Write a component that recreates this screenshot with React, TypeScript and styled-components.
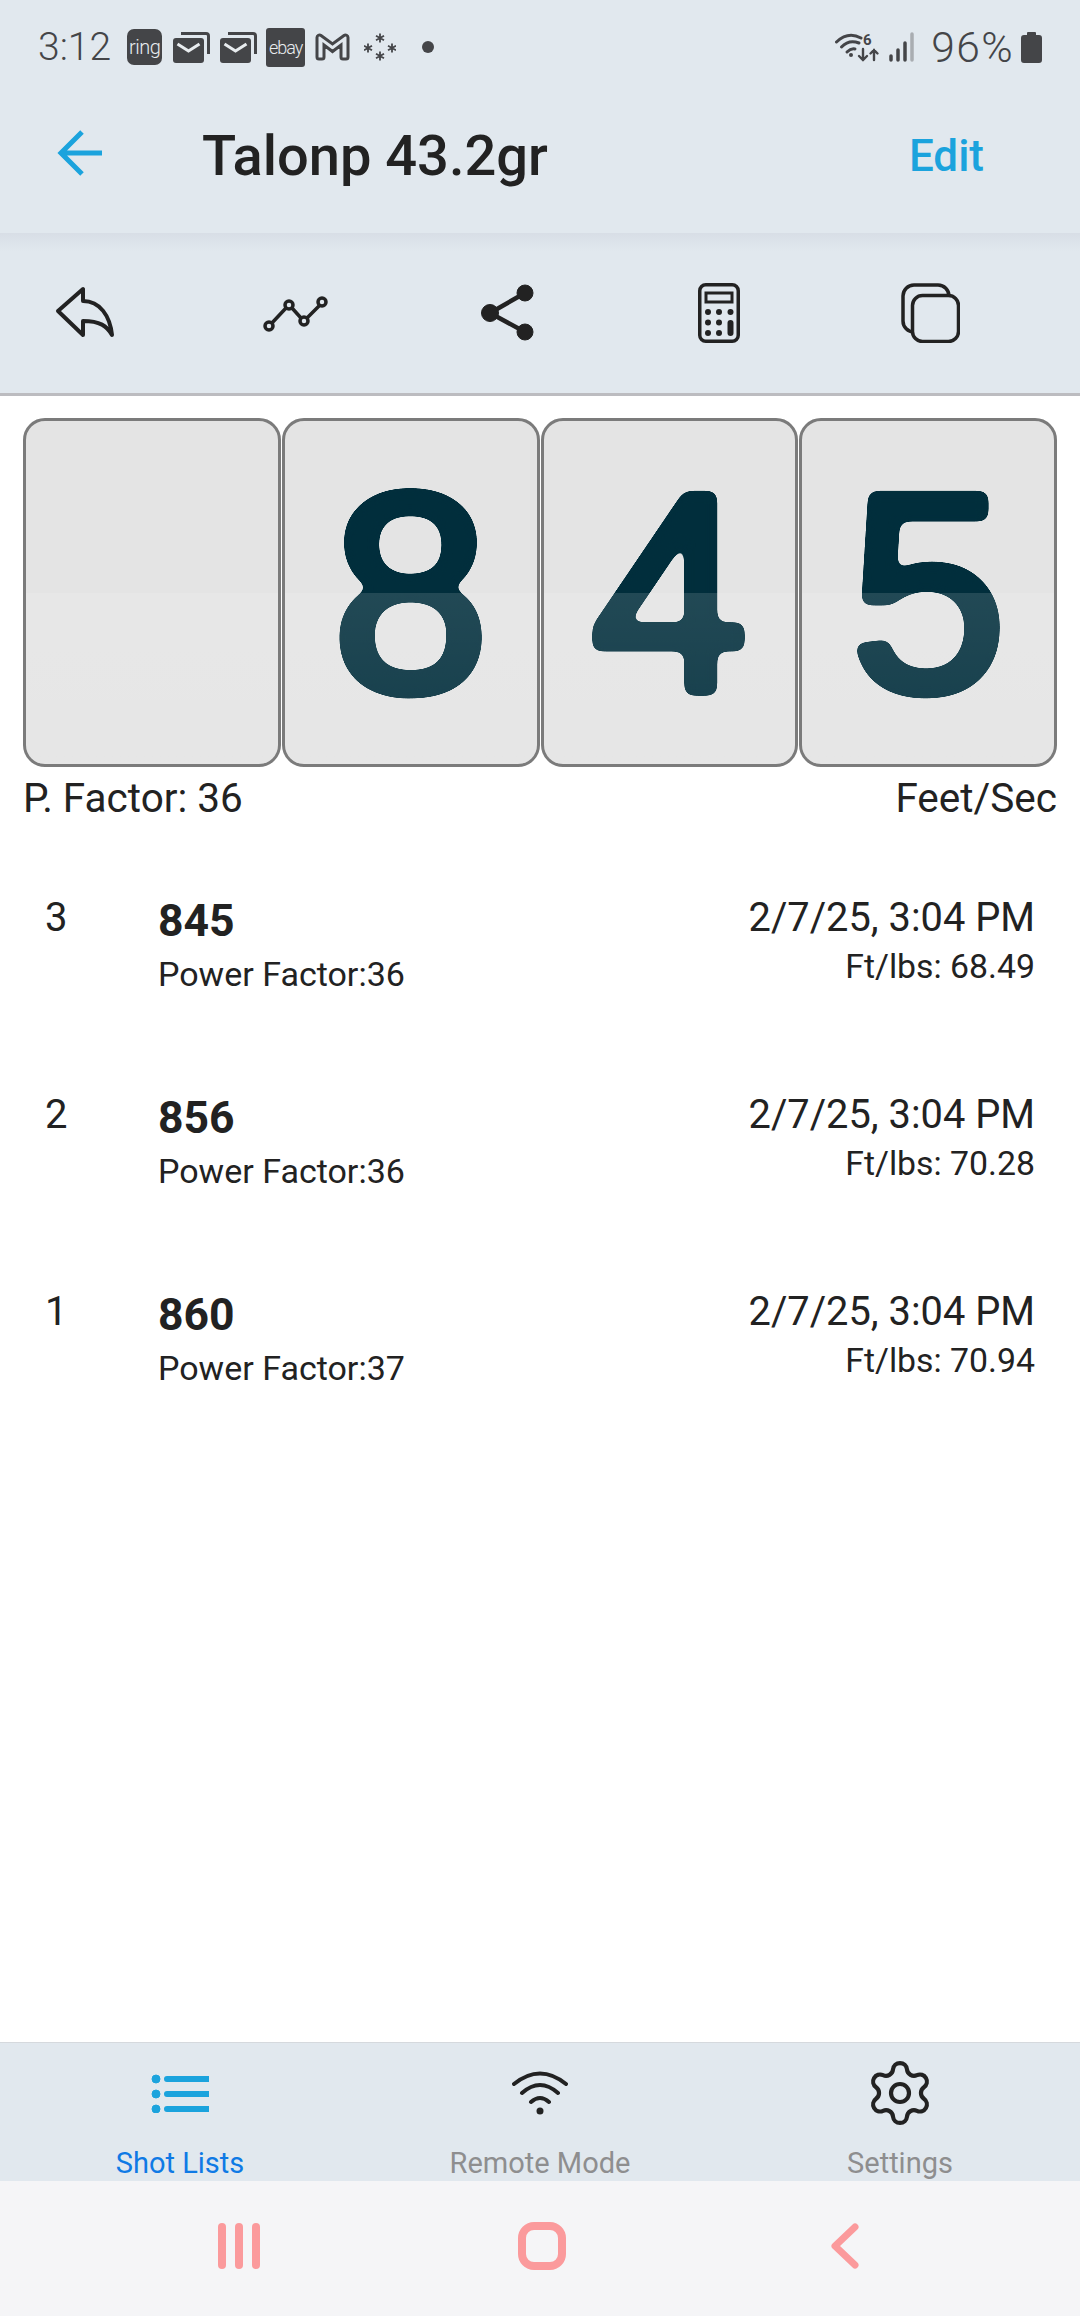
import styled, { createGlobalStyle } from "styled-components";
import { Settings } from "lucide-react";

const ACCENT = "#1ba3dd";
const INK = "#222222";
const STATUS = "#444548";
const BAR = "#e1e8ee";

const shots = [
  { id: 3, speed: 845, power: 36, energy: "68.49" },
  { id: 2, speed: 856, power: 36, energy: "70.28" },
  { id: 1, speed: 860, power: 37, energy: "70.94" },
];

const GlobalStyle = createGlobalStyle`
  html, body {
    margin: 0;
    padding: 0;
    background: #ffffff;
  }
  body {
    font-family: Roboto, "Liberation Sans", sans-serif;
    color: ${INK};
  }
`;

const Page = styled.div`
  width: 1080px;
  height: 2316px;
  display: flex;
  flex-direction: column;
  overflow: hidden;
  position: relative;
`;

const TopBar = styled.header`
  height: 233px;
  flex: none;
  background: ${BAR};
  display: flex;
  flex-direction: column;
`;

const StatusBar = styled.div`
  height: 94px;
  padding: 0 38px;
  display: flex;
  align-items: center;
  justify-content: space-between;
  color: ${STATUS};
  font-size: 39px;
  font-weight: 300;
`;

const StatusGroup = styled.div`
  display: flex;
  align-items: center;
`;

const Clock = styled.span`
  margin-right: 16px;
`;

const AppBadge = styled.span<{ $wide?: boolean }>`
  width: ${p => (p.$wide ? 39 : 35)}px;
  height: ${p => (p.$wide ? 39 : 36)}px;
  border-radius: ${p => (p.$wide ? 3 : 7)}px;
  background: ${STATUS};
  color: #e8ecef;
  font-size: ${p => (p.$wide ? 18 : 20)}px;
  font-weight: 300;
  letter-spacing: ${p => (p.$wide ? -1 : -0.5)}px;
  display: flex;
  align-items: center;
  justify-content: center;
`;

const StatusIcon = styled.svg<{ $left?: number }>`
  display: block;
  flex: none;
  margin-left: ${p => p.$left ?? 0}px;
`;

const Level = styled.span`
  margin: 0 7px 0 15px;
  font-size: 42.5px;
  letter-spacing: 1.4px;
`;

const NavRow = styled.div`
  flex: 1;
  display: flex;
  align-items: center;
  padding: 0 96px 16px 57px;
`;

const BackIcon = styled.svg`
  display: block;
  flex: none;
  margin-bottom: 5px;
`;

const Title = styled.h1`
  flex: 1;
  margin: 0 0 0 100px;
  font-size: 56px;
  font-weight: 500;
  color: ${INK};
`;

const EditLink = styled.span`
  color: ${ACCENT};
  font-size: 44px;
  font-weight: 500;
`;

const Toolbar = styled.div`
  height: 163px;
  flex: none;
  box-sizing: border-box;
  background: linear-gradient(#d8dee6 0, ${BAR} 18px);
  border-bottom: 3px solid #bcbcc0;
  padding: 0 100px 0 35px;
  display: flex;
  align-items: center;
  justify-content: space-between;
`;

const ToolSlot = styled.div<{ $down?: number }>`
  width: 100px;
  display: flex;
  justify-content: center;
  padding-top: ${p => p.$down ?? 0}px;
`;

const Content = styled.main`
  flex: 1;
  padding: 22px 23px 0;
  display: flex;
  flex-direction: column;
`;

const Digits = styled.div`
  display: flex;
  gap: 1px;
`;

const DigitCard = styled.div`
  position: relative;
  flex: 1;
  height: 349px;
  box-sizing: border-box;
  border: 3px solid #7b7b7b;
  border-radius: 22px;
  background: #e4e4e4;
  overflow: hidden;
  display: flex;
  align-items: center;
  justify-content: center;

  &::after {
    content: "";
    position: absolute;
    left: 0;
    right: 0;
    top: 50%;
    bottom: 0;
    background: linear-gradient(rgba(255, 255, 255, 0.13), rgba(255, 255, 255, 0.07));
  }
`;

const Digit = styled.span`
  font-family: "Liberation Sans", Arial, sans-serif;
  font-size: 284px;
  line-height: 1;
  font-weight: 400;
  color: #012e3c;
  -webkit-text-stroke: 9px #012e3c;
  filter: url(#rounded-digit);
`;

const Caption = styled.div`
  display: flex;
  justify-content: space-between;
  font-size: 40.5px;
  line-height: 46px;
  margin-top: 8px;
`;

const ShotList = styled.div`
  padding: 74px 22px 0;
  display: flex;
  flex-direction: column;
  flex: 1;
`;

const ShotRow = styled.div`
  height: 197px;
  display: grid;
  grid-template-columns: 113px 1fr auto;
  align-items: start;
`;

const ShotIndex = styled.div`
  font-size: 40px;
  line-height: 46px;
`;

const ShotSpeed = styled.div`
  font-size: 44.5px;
  font-weight: 700;
  line-height: 52px;
`;

const ShotSub = styled.div`
  font-size: 34px;
  line-height: 40px;
  margin-top: 7px;
`;

const ShotDate = styled.div`
  font-size: 39.8px;
  line-height: 46px;
  text-align: right;
`;

const ShotEnergy = styled.div`
  font-size: 33.8px;
  line-height: 40px;
  text-align: right;
  margin-top: 6px;
`;

const TabBar = styled.nav`
  height: 139px;
  flex: none;
  box-sizing: border-box;
  background: ${BAR};
  border-top: 1px solid #d5d9dd;
  display: grid;
  grid-template-columns: repeat(3, 360px);
`;

const Tab = styled.div<{ $active?: boolean }>`
  position: relative;
  display: flex;
  flex-direction: column;
  align-items: center;
  overflow: hidden;
  color: ${p => (p.$active ? "#0f7ae5" : "#8e8e8f")};
  font-size: 29px;
`;

const TabIcon = styled.div`
  height: 98px;
  padding-top: 2px;
  display: flex;
  align-items: center;
  justify-content: center;
`;

const TabLabel = styled.span`
  line-height: 36px;
  margin-top: 5px;
`;

const SystemNav = styled.div`
  height: 135px;
  flex: none;
  box-sizing: border-box;
  background: #f5f5f7;
  padding: 0 84px 6px 89px;
  display: grid;
  grid-template-columns: repeat(3, 302px);
  justify-items: center;
  align-items: center;
`;

const NavGlyph = styled.svg`
  display: block;
`;

const ChevronDown = () => <polyline points="5,13 16,20 27,13" fill="none" stroke="#e8ecef" strokeWidth="3" />;

const MailStack = ({ left }: { left: number }) => (
  <StatusIcon $left={left} width="37" height="31" viewBox="0 0 37 31">
    <path d="M8 1.5H33a2.5 2.5 0 0 1 2.5 2.5V22" fill="none" stroke={STATUS} strokeWidth="3" />
    <rect x="0" y="6" width="31" height="25" rx="3" fill={STATUS} />
    <g transform="translate(-0.5,-1)"><ChevronDown /></g>
  </StatusIcon>
);

const Star = ({ x, y }: { x: number; y: number }) => (
  <path
    d={`M${x} ${y - 4.5}V${y + 4.5}M${x - 4} ${y - 2.3}L${x + 4} ${y + 2.3}M${x - 4} ${y + 2.3}L${x + 4} ${y - 2.3}`}
    stroke={STATUS}
    strokeWidth="1.8"
  />
);

function App() {
  return (
    <Page>
      <GlobalStyle />
      <svg width="0" height="0" style={{ position: "absolute" }} aria-hidden="true">
        <filter id="rounded-digit" colorInterpolationFilters="sRGB" x="-10%" y="-10%" width="120%" height="120%">
          <feGaussianBlur stdDeviation="5.5" />
          <feColorMatrix values="1 0 0 0 0 0 1 0 0 0 0 0 1 0 0 0 0 0 24 -11" />
        </filter>
      </svg>

      <TopBar>
        <StatusBar>
          <StatusGroup>
            <Clock>3:12</Clock>
            <AppBadge>ring</AppBadge>
            <MailStack left={11} />
            <MailStack left={10} />
            <StatusIcon as="span" $left={9}>
              <AppBadge $wide>ebay</AppBadge>
            </StatusIcon>
            <StatusIcon $left={10} width="35" height="28" viewBox="0 0 35 28">
              <path
                d="M2 4.5a2.5 2.5 0 0 1 4-2L17.5 11 29 2.500a2.500 2.500 0 0 1 4 2V24a2 2 0 0 1-2 2h-3a2 2 0 0 1-2-2V12l-8.500 6.500L9 12v12a2 2 0 0 1-2 2H4a2 2 0 0 1-2-2Z"
                fill="none"
                stroke={STATUS}
                strokeWidth="3"
              />
            </StatusIcon>
            <StatusIcon $left={14} width="32" height="30" viewBox="0 0 32 30">
              <Star x={16} y={6} />
              <Star x={4} y={16} />
              <Star x={28} y={16} />
              <Star x={16} y={24} />
            </StatusIcon>
            <StatusIcon $left={26} width="12" height="12" viewBox="0 0 12 12">
              <circle cx="6" cy="6" r="6" fill={STATUS} />
            </StatusIcon>
          </StatusGroup>
          <StatusGroup>
            <StatusIcon width="45" height="32" viewBox="0 0 45 32" fill="none" stroke={STATUS} strokeLinecap="round">
              <path d="M1.500 11Q13 0 26 7" strokeWidth="3" />
              <path d="M6.500 16Q14 8 24 12" strokeWidth="3" />
              <path d="M12 21Q16 17 20 18" strokeWidth="3" />
              <circle cx="16" cy="24" r="2" fill={STATUS} stroke="none" />
              <text x="28" y="14" fontSize="15" fontWeight="700" fill={STATUS} stroke="none" fontFamily="Roboto, sans-serif">6</text>
              <path d="M28 18V29M24 25l4 4 4-4M39 29V19M35.500 22.500L39 19l3.500 3.500" strokeWidth="2.400" />
            </StatusIcon>
            <StatusIcon $left={9} width="27" height="30" viewBox="0 0 27 30" stroke={STATUS} strokeWidth="3.500" strokeLinecap="round">
              <path d="M2 24V28M9 18V28M16 11V28" />
              <path d="M23 2V28" stroke="#a9adb1" />
            </StatusIcon>
            <Level>96%</Level>
            <StatusIcon width="21" height="31" viewBox="0 0 21 31">
              <path d="M7 0h7a1 1 0 0 1 1 1v2h3a3 3 0 0 1 3 3v22a3 3 0 0 1-3 3H3a3 3 0 0 1-3-3V6a3 3 0 0 1 3-3h3V1a1 1 0 0 1 1-1Z" fill={STATUS} />
            </StatusIcon>
          </StatusGroup>
        </StatusBar>
        <NavRow>
          <BackIcon width="45" height="46" viewBox="0 0 45 46" fill="none" stroke={ACCENT} strokeWidth="5">
            <path d="M45 23H5M25 2L4 23l21 21" />
          </BackIcon>
          <Title>Talonp 43.2gr</Title>
          <EditLink>Edit</EditLink>
        </NavRow>
      </TopBar>

      <Toolbar>
        <ToolSlot>
          <svg width="60" height="54" viewBox="0 0 60 54" fill="none" stroke={INK} strokeWidth="4" strokeLinejoin="round">
            <path d="M3 25L28 3V15C45 15 55 30 57 49C52 40 45 35 28 35V49Z" />
          </svg>
        </ToolSlot>
        <ToolSlot $down={4}>
          <svg width="68" height="38" viewBox="0 0 68 38" fill="none" stroke={INK} strokeWidth="3.500">
            <path d="M9 28L24 12M30 12L39 22M45 22L58 9" />
            <circle cx="7" cy="30" r="4" />
            <circle cx="27" cy="9" r="4" />
            <circle cx="42" cy="25" r="4" />
            <circle cx="60" cy="6" r="4" />
          </svg>
        </ToolSlot>
        <ToolSlot>
          <svg width="56" height="60" viewBox="0 0 56 60" fill={INK} stroke={INK}>
            <path d="M45 10L10 30L45 49" fill="none" strokeWidth="4.500" />
            <circle cx="45" cy="10" r="8" />
            <circle cx="10" cy="30" r="8.500" />
            <circle cx="45" cy="49" r="8" />
          </svg>
        </ToolSlot>
        <ToolSlot>
          <svg width="42" height="60" viewBox="0 0 42 60" fill={INK}>
            <rect x="1.750" y="1.750" width="38.500" height="56.500" rx="6" fill="none" stroke={INK} strokeWidth="3.500" />
            <rect x="8" y="10" width="26" height="9" fill="none" stroke={INK} strokeWidth="3" />
            <circle cx="10" cy="29" r="3" />
            <circle cx="21" cy="29" r="3" />
            <circle cx="32.500" cy="29" r="3" />
            <circle cx="10" cy="39.500" r="3" />
            <circle cx="21" cy="39.500" r="3" />
            <circle cx="10" cy="50" r="3" />
            <circle cx="21" cy="50" r="3" />
            <rect x="29.500" y="37" width="6" height="16" rx="3" />
          </svg>
        </ToolSlot>
        <ToolSlot>
          <svg width="60" height="60" viewBox="1 0 60 60" fill={BAR} stroke={INK} strokeWidth="3.500">
            <rect x="4" y="2" width="46" height="47" rx="11" />
            <rect x="13.500" y="12.500" width="46" height="46" rx="10" />
          </svg>
        </ToolSlot>
      </Toolbar>

      <Content>
        <Digits>
          {["", "8", "4", "5"].map((d, i) => (
            <DigitCard key={i}>{d && <Digit>{d}</Digit>}</DigitCard>
          ))}
        </Digits>
        <Caption>
          <span>P. Factor: 36</span>
          <span>Feet/Sec</span>
        </Caption>
        <ShotList>
          {shots.map(shot => (
            <ShotRow key={shot.id}>
              <ShotIndex>{shot.id}</ShotIndex>
              <div>
                <ShotSpeed>{shot.speed}</ShotSpeed>
                <ShotSub>Power Factor:{shot.power}</ShotSub>
              </div>
              <div>
                <ShotDate>2/7/25, 3:04 PM</ShotDate>
                <ShotEnergy>Ft/lbs: {shot.energy}</ShotEnergy>
              </div>
            </ShotRow>
          ))}
        </ShotList>
      </Content>

      <TabBar>
        <Tab $active>
          <TabIcon>
            <svg width="58" height="40" viewBox="0 0 58 40" fill={ACCENT} stroke={ACCENT}>
              <path d="M16 6H57M16 21H57M16 36H57" fill="none" strokeWidth="6" strokeLinecap="round" />
              <circle cx="5" cy="6" r="4" />
              <circle cx="5" cy="21" r="4" />
              <circle cx="5" cy="36" r="4" />
            </svg>
          </TabIcon>
          <TabLabel>Shot Lists</TabLabel>
        </Tab>
        <Tab>
          <TabIcon>
            <svg width="56" height="44" viewBox="0 0 56 44" fill="none" stroke={INK} strokeWidth="4" strokeLinecap="round">
              <path d="M2 13Q28 -8 54 13M10 22Q28 6 46 22M19 31Q28 23 37 31" />
              <circle cx="28" cy="40" r="3.500" fill={INK} stroke="none" />
            </svg>
          </TabIcon>
          <TabLabel>Remote Mode</TabLabel>
        </Tab>
        <Tab>
          <TabIcon>
            <Settings size={72} color={INK} strokeWidth={1.4} />
          </TabIcon>
          <TabLabel>Settings</TabLabel>
        </Tab>
      </TabBar>

      <SystemNav>
        <NavGlyph width="44" height="46" viewBox="0 0 44 46" fill="#fb9a9c">
          <rect x="0" y="0" width="8" height="46" rx="4" />
          <rect x="17" y="0" width="8" height="46" rx="4" />
          <rect x="34" y="0" width="8" height="46" rx="4" />
        </NavGlyph>
        <NavGlyph width="48" height="48" viewBox="0 0 48 48" fill="none" stroke="#fb9a9c" strokeWidth="8">
          <rect x="4" y="4" width="40" height="40" rx="12" />
        </NavGlyph>
        <NavGlyph width="30" height="46" viewBox="0 0 30 46" fill="none" stroke="#fb9a9c" strokeWidth="7" strokeLinecap="round" strokeLinejoin="round">
          <path d="M26 4L6 23L26 42" />
        </NavGlyph>
      </SystemNav>
    </Page>
  );
}

export default App;
